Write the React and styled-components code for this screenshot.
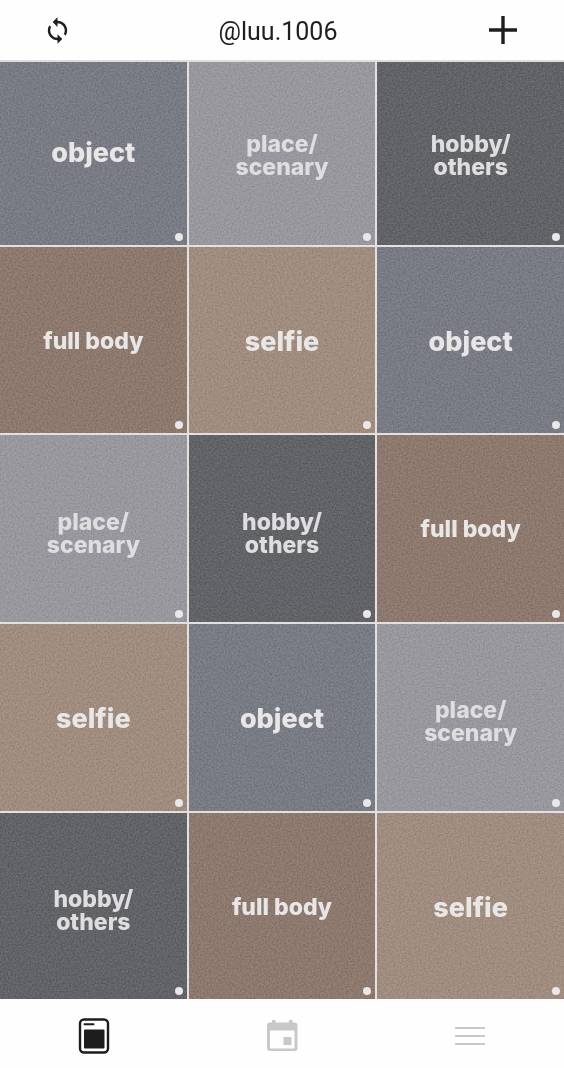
import React from "react";
import styled, { createGlobalStyle } from "styled-components";
import { MdSync } from "react-icons/md";

const GlobalStyle = createGlobalStyle`
  * { box-sizing: border-box; }
  body { margin: 0; background: #fefefe; font-family: Roboto, "Liberation Sans", sans-serif; }
  button { border: 0; padding: 0; background: none; font: inherit; color: inherit; cursor: pointer; }
`;

const Page = styled.div`
  display: flex;
  flex-direction: column;
  min-height: 100vh;
`;

const Header = styled.header`
  position: relative;
  z-index: 1;
  display: flex;
  align-items: center;
  height: 62px;
  padding: 0 37px;
  background: #fefefe;
  border-bottom: 2px solid #dcdedc;
  color: #1e1e20;
`;

const HeaderButton = styled.button`
  display: flex;
  align-items: center;
  justify-content: center;
  width: ${(p) => (p.$wide ? 48 : 40)}px;
  height: 48px;
`;

const Title = styled.h1`
  flex: 1;
  margin: 0;
  padding-top: 4px;
  text-align: center;
  font-size: 25px;
  line-height: 32px;
  font-weight: 400;
`;

/* The feed is scrolled slightly, so its first row slides under the header. */
const Feed = styled.main`
  display: grid;
  grid-template-columns: repeat(3, 1fr);
  gap: 2px;
  margin-top: -4px;
  background: #e2e1df;
`;

const palette = {
  object: "#7a7c85",
  place: "#98989e",
  hobby: "#626366",
  body: "#8e796e",
  selfie: "#a08d7f",
};

const Tile = styled.button`
  position: relative;
  display: flex;
  align-items: center;
  justify-content: center;
  aspect-ratio: 1;
  padding-top: ${(p) => (p.$tall ? 10 : 2)}px;
  overflow: hidden;
  background: ${(p) => palette[p.$kind]};
`;

const Grain = styled.svg`
  position: absolute;
  inset: 0;
  width: 100%;
  height: 100%;
  mix-blend-mode: soft-light;
  opacity: 0.25;
`;

const Label = styled.span`
  position: relative;
  white-space: pre-line;
  text-align: center;
  font-family: Inter, "Liberation Sans", sans-serif;
  font-weight: 800;
  font-size: ${(p) => p.$size}px;
  line-height: 23px;
  color: ${(p) => (p.$soft ? "#dededf" : "#e8e7e6")};
`;

const Dot = styled.span`
  position: absolute;
  right: 4px;
  bottom: 4px;
  width: 8px;
  height: 8px;
  border-radius: 50%;
  background: #e9e8e8;
`;

const TabBar = styled.nav`
  display: grid;
  grid-template-columns: repeat(3, 1fr);
  flex: 1;
  min-height: 68px;
  padding-top: 4px;
  position: relative;
  background: #fefefe;
`;

const Tab = styled.button`
  display: flex;
  align-items: center;
  justify-content: center;
  color: ${(p) => (p.$active ? "#1d1d1f" : "#c8c8c8")};
`;

const kinds = {
  object: { text: "object", size: 27 },
  place: { text: "place/\nscenary", size: 23 },
  hobby: { text: "hobby/\nothers", size: 23 },
  body: { text: "full body", size: 23 },
  selfie: { text: "selfie", size: 27 },
};

const feed = [
  "object", "place", "hobby",
  "body", "selfie", "object",
  "place", "hobby", "body",
  "selfie", "object", "place",
  "hobby", "body", "selfie",
];

const PlusIcon = () => (
  <svg width="28" height="28" viewBox="0 0 28 28" aria-hidden="true">
    <path d="M14 0v28M0 14h28" stroke="currentColor" strokeWidth="3.4" />
  </svg>
);

const FeedIcon = () => (
  <svg width="32" height="36" viewBox="0 0 32 36" fill="none" aria-hidden="true">
    <rect x="2" y="1.5" width="28" height="33" rx="4" stroke="currentColor" strokeWidth="2.4" />
    <path d="M6.5 6.2h9" stroke="currentColor" strokeWidth="2" strokeLinecap="round" />
    <rect x="6" y="11.5" width="20.5" height="19" rx="1" fill="currentColor" />
  </svg>
);

const CalendarIcon = () => (
  <svg width="32" height="32" viewBox="0 0 32 32" fill="currentColor" aria-hidden="true">
    <path
      fillRule="evenodd"
      d="M6 0h3.500v2.500h13.500V0h3.500v2.500H28.500a3 3 0 0 1 3 3V28a3 3 0 0 1-3 3H4a3 3 0 0 1-3-3V5.500a3 3 0 0 1 3-3h2ZM4 10.500V28.500h24.500V10.500Z"
    />
    <rect x="17.500" y="17" width="8" height="8" />
  </svg>
);

const MenuIcon = () => (
  <svg width="32" height="20" viewBox="0 0 32 20" aria-hidden="true">
    <path d="M1 2h30M1 10h30M1 18h30" stroke="currentColor" strokeWidth="2" />
  </svg>
);

export default function App() {
  return (
    <Page>
      <GlobalStyle />
      <Header>
        <HeaderButton aria-label="Refresh">
          <MdSync size={29} />
        </HeaderButton>
        <Title>@luu.1006</Title>
        <HeaderButton $wide aria-label="Add">
          <PlusIcon />
        </HeaderButton>
      </Header>
      <Feed>
        {feed.map((kind, i) => (
          <Tile key={i} $kind={kind} $tall={kinds[kind].text.includes("\n")}>
            <Grain aria-hidden="true">
              <filter id={`grain-${i}`} x="0" y="0" width="100%" height="100%" colorInterpolationFilters="sRGB">
                <feTurbulence type="fractalNoise" baseFrequency="0.6" numOctaves="2" seed={i} />
                <feColorMatrix values="1.5 0 0 0 -0.25  1.5 0 0 0 -0.25  1.5 0 0 0 -0.25  0 0 0 0 1" />
              </filter>
              <rect width="100%" height="100%" filter={`url(#grain-${i})`} />
            </Grain>
            <Label $size={kinds[kind].size} $soft={kind === "place" || kind === "hobby"}>
              {kinds[kind].text}
            </Label>
            <Dot />
          </Tile>
        ))}
      </Feed>
      <TabBar>
        <Tab $active aria-label="Feed"><FeedIcon /></Tab>
        <Tab aria-label="Calendar"><CalendarIcon /></Tab>
        <Tab aria-label="Menu"><MenuIcon /></Tab>
      </TabBar>
    </Page>
  );
}
